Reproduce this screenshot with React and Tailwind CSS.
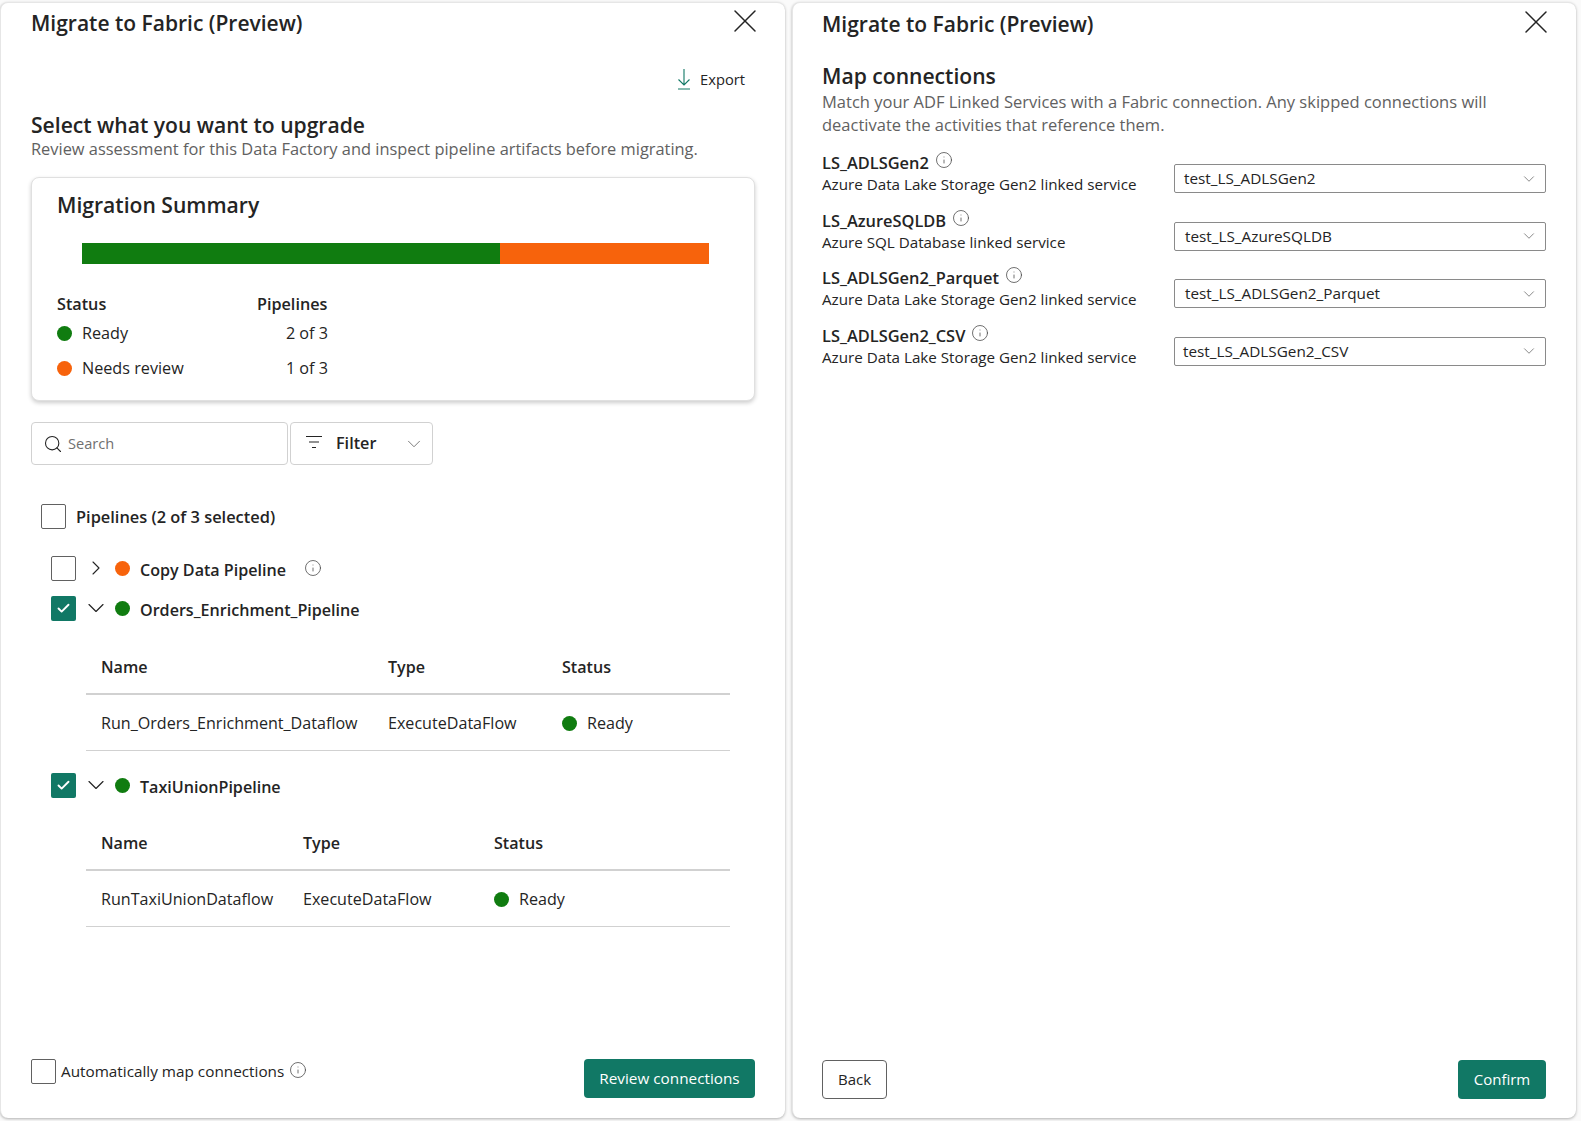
import React from "react";
import { ChevronDown, ChevronRight, Search, X, Info, Check } from "lucide-react";

const FONT = "font-['Open_Sans','Noto_Sans',sans-serif]";

function Dot({ color }) {
  return (
    <span
      className={`block h-[15px] w-[15px] shrink-0 rounded-full ${
        color === "green" ? "bg-[#107c10]" : "bg-[#f7630c]"
      }`}
    />
  );
}

function Box({ checked, className = "" }) {
  if (checked) {
    return (
      <span
        className={`flex h-[25px] w-[25px] shrink-0 items-center justify-center rounded-[2px] bg-[#117865] ${className}`}
      >
        <Check className="h-[15px] w-[15px] text-white" strokeWidth={3} />
      </span>
    );
  }
  return (
    <span
      className={`block h-[25px] w-[25px] shrink-0 rounded-[2px] border border-[#616161] bg-white ${className}`}
    />
  );
}

function InfoIcon({ className = "" }) {
  return (
    <Info className={`h-[18px] w-[18px] shrink-0 text-[#424242] ${className}`} strokeWidth={1} />
  );
}

function Header({ closeClass }) {
  return (
    <div className="flex items-start justify-between">
      <h1 className="text-[21px] leading-[28px] font-semibold text-[#242424]">
        Migrate to Fabric (Preview)
      </h1>
      <X className={`mt-[-8px] h-[40px] w-[40px] text-[#242424] ${closeClass}`} strokeWidth={0.9} />
    </div>
  );
}

function PipelineRow({ checked, open, color, name, info, className = "" }) {
  return (
    <div className={`flex h-[25px] items-center pl-[20px] ${className}`}>
      <Box checked={checked} />
      <span className="flex w-[39px] justify-center">
        {open ? (
          <ChevronDown className="mb-[2px] h-[28px] w-[28px] text-[#242424]" strokeWidth={1} />
        ) : (
          <ChevronRight className="mb-[2px] h-[24px] w-[24px] text-[#242424]" strokeWidth={1.1} />
        )}
      </span>
      <Dot color={color} />
      <span className="mt-[4px] ml-[10px] text-[16.1px] leading-[25px] font-semibold text-[#242424]">{name}</span>
      {info && <InfoIcon className="mb-[2px] ml-[18px]" />}
    </div>
  );
}

function ActivityTable({ cols, name, className }) {
  return (
    <div className={`ml-[55px] mr-[29px] text-[16.1px] text-[#242424] ${className}`}>
      <div className={`grid h-[55px] items-center border-b-2 border-[#d1d1d1] pt-[2px] pl-[15px] text-[16.1px] font-semibold ${cols}`}>
        <span>Name</span>
        <span>Type</span>
        <span>Status</span>
      </div>
      <div className={`grid h-[56px] items-center border-b border-[#d1d1d1] pt-[2px] pl-[15px] ${cols}`}>
        <span>{name}</span>
        <span>ExecuteDataFlow</span>
        <span className="flex items-center gap-[10px]">
          <Dot color="green" />
          Ready
        </span>
      </div>
    </div>
  );
}

function SummaryRow({ color, label, value }) {
  return (
    <div className="flex h-[35px] items-center text-[16.2px] text-[#242424]">
      <Dot color={color} />
      <span className="ml-[10px] w-[186px]">{label}</span>
      <span className="w-[60px] text-right">{value}</span>
    </div>
  );
}

function ConnectionRow({ name, service, value, inset }) {
  return (
    <div className="flex h-[57.5px] items-start">
      <div className="w-[352px] shrink-0">
        <div className="flex h-[22px] items-start leading-[22px]">
          <span className="text-[16.4px] font-semibold text-[#242424]">{name}</span>
          <InfoIcon className="ml-[6px] mt-[-1px]" />
        </div>
        <div className="text-[15.2px] leading-[20px] text-[#242424]">{service}</div>
      </div>
      <div className="mt-[12px] flex h-[29px] w-[372px] items-center justify-between rounded-[2px] border border-[#8a8a8a] bg-white pr-[7px] text-[15.3px] text-[#242424]">
        <span style={{ paddingLeft: inset }}>{value}</span>
        <ChevronDown className="h-[18px] w-[18px] text-[#616161]" strokeWidth={1} />
      </div>
    </div>
  );
}

export default function App() {
  return (
    <div className={`flex h-[1121px] w-[1581px] gap-[7px] overflow-hidden bg-[#fafafa] ${FONT}`}>
      {/* left panel */}
      <section className="mt-[2px] mb-[3px] flex w-[785px] flex-col rounded-[8px] border-t border-l border-[#e6e6e6] bg-white pt-[6px] pl-[30px] pr-[26px] shadow-[0_1px_3px_rgba(0,0,0,0.3)]">
        <Header closeClass="mr-[-6px]" />
        <div className="mt-[27px] flex items-center justify-end pr-[14px] text-[14.7px] text-[#242424]">
          <svg className="mr-[8px] h-[22px] w-[16px]" viewBox="0 0 16 22" fill="none" stroke="#117865" strokeWidth="1.1">
            <path d="M8 1v16M2.5 11.5 8 17l5.5-5.5M2 21h12" />
          </svg>
          Export
        </div>
        <h2 className="mt-[22px] text-[21.1px] leading-[26px] font-semibold text-[#242424]">
          Select what you want to upgrade
        </h2>
        <p className="text-[16.4px] leading-[22px] text-[#616161]">
          Review assessment for this Data Factory and inspect pipeline artifacts before migrating.
        </p>
        <div className="mt-[17px] h-[224px] w-[724px] rounded-[8px] border border-[#e0e0e0] bg-white pt-[13px] pl-[25px] shadow-[0_2px_4px_rgba(0,0,0,0.2)]">
          <h3 className="text-[21.1px] leading-[28px] font-semibold text-[#242424]">Migration Summary</h3>
          <div className="mt-[24px] ml-[25px] flex h-[21px] w-[627px]">
            <div className="w-[418px] bg-[#107c10]" />
            <div className="flex-1 bg-[#f7630c]" />
          </div>
          <div className="mt-[29px] flex h-[22px] items-center text-[16.2px] font-semibold text-[#242424]">
            <span className="w-[200px]">Status</span>
            <span>Pipelines</span>
          </div>
          <div className="mt-[1px]">
            <SummaryRow color="green" label="Ready" value="2 of 3" />
            <SummaryRow color="orange" label="Needs review" value="1 of 3" />
          </div>
        </div>
        <div className="mt-[21px] flex gap-[2px]">
          <div className="flex h-[43px] w-[257px] items-center rounded-[4px] border border-[#d1d1d1] pl-[11px] text-[14.6px] text-[#707070]">
            <Search className="mr-[5px] h-[20px] w-[20px] text-[#242424]" strokeWidth={1.3} />
            Search
          </div>
          <div className="flex h-[43px] w-[143px] items-center rounded-[4px] border border-[#d1d1d1] pl-[14px] text-[16.2px] font-semibold text-[#242424]">
            <svg className="mb-[3px] h-[14px] w-[18px]" viewBox="0 0 18 14" fill="none" stroke="#242424" strokeWidth="1.2">
              <path d="M1 1.5h16M4 7h10M7 12.5h4" />
            </svg>
            <span className="ml-[13px]">Filter</span>
            <ChevronDown className="ml-[27px] h-[22px] w-[22px] text-[#616161]" strokeWidth={0.9} />
          </div>
        </div>
        <div className="mt-[39px] flex h-[25px] items-center pl-[10px]">
          <Box />
          <span className="mt-[2px] ml-[10px] text-[16.4px] font-semibold text-[#242424]">Pipelines (2 of 3 selected)</span>
        </div>
        <PipelineRow className="mt-[27px]" color="orange" name="Copy Data Pipeline" info />
        <PipelineRow className="mt-[15px]" checked open color="green" name="Orders_Enrichment_Pipeline" />
        <ActivityTable className="mt-[19px]" cols="grid-cols-[287px_174px_1fr]" name="Run_Orders_Enrichment_Dataflow" />
        <PipelineRow className="mt-[22px]" checked open color="green" name="TaxiUnionPipeline" />
        <ActivityTable className="mt-[18px]" cols="grid-cols-[202px_191px_1fr]" name="RunTaxiUnionDataflow" />
        <div className="mt-auto mb-[20px] flex items-start justify-between pr-[4px]">
          <div className="flex items-center pb-[14px]">
            <Box />
            <span className="ml-[5px] text-[15.3px] text-[#242424]">Automatically map connections</span>
            <InfoIcon className="mb-[4px] ml-[5px]" />
          </div>
          <button className="h-[39px] w-[171px] rounded-[4px] bg-[#117865] text-[15.3px] text-white">
            Review connections
          </button>
        </div>
      </section>

      {/* right panel */}
      <section className="mt-[2px] mb-[3px] flex w-[784px] flex-col rounded-[8px] border-t border-l border-[#e6e6e6] bg-white pt-[7px] pl-[29px] pr-[30px] shadow-[0_1px_3px_rgba(0,0,0,0.3)]">
        <Header closeClass="mr-[-10px]" />
        <h2 className="mt-[20px] text-[21.1px] leading-[28px] font-semibold text-[#242424]">Map connections</h2>
        <p className="text-[16.5px] leading-[23px] text-[#616161]">
          Match your ADF Linked Services with a Fabric connection. Any skipped connections will
          <br />
          deactivate the activities that reference them.
        </p>
        <div className="mt-[16px]">
          <ConnectionRow name="LS_ADLSGen2" service="Azure Data Lake Storage Gen2 linked service" value="test_LS_ADLSGen2" inset="9px" />
          <ConnectionRow name="LS_AzureSQLDB" service="Azure SQL Database linked service" value="test_LS_AzureSQLDB" inset="10px" />
          <ConnectionRow name="LS_ADLSGen2_Parquet" service="Azure Data Lake Storage Gen2 linked service" value="test_LS_ADLSGen2_Parquet" inset="10px" />
          <ConnectionRow name="LS_ADLSGen2_CSV" service="Azure Data Lake Storage Gen2 linked service" value="test_LS_ADLSGen2_CSV" inset="8px" />
        </div>
        <div className="mt-auto mb-[19px] flex justify-between">
          <button className="h-[39px] w-[65px] rounded-[4px] border border-[#616161] text-[15px] text-[#242424]">Back</button>
          <button className="h-[39px] w-[88px] rounded-[4px] bg-[#117865] text-[15px] text-white">Confirm</button>
        </div>
      </section>
    </div>
  );
}
